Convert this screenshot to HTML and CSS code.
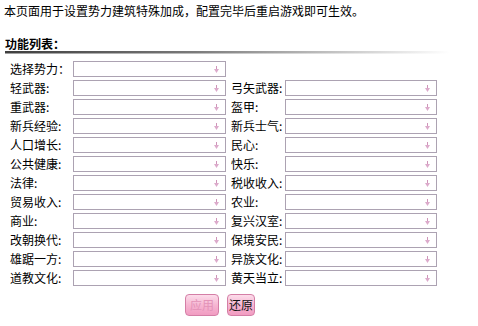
FILE: index.html
```html
<!DOCTYPE html>
<html lang="zh">
<head>
<meta charset="utf-8">
<title>功能列表</title>
<link rel="stylesheet" href="styles.css">
</head>
<body>
<p class="intro">本页面用于设置势力建筑特殊加成，配置完毕后重启游戏即可生效。</p>
<h3 class="title">功能列表：</h3>
<div class="rule"></div>
<div class="grid">
  <span class="lbl">选择势力：</span><div class="sel"><svg width="5" height="7" viewBox="0 0 5 7"><rect x="2" y="0" width="1" height="4" fill="#cf95b9"/><polygon points="0,3 5,3 2.5,7" fill="#dcaacb"/></svg></div><span class="lbl2"></span><span></span>
  <span class="lbl">轻武器:</span><div class="sel"><svg width="5" height="7" viewBox="0 0 5 7"><rect x="2" y="0" width="1" height="4" fill="#cf95b9"/><polygon points="0,3 5,3 2.5,7" fill="#dcaacb"/></svg></div><span class="lbl2">弓矢武器:</span><div class="sel"><svg width="5" height="7" viewBox="0 0 5 7"><rect x="2" y="0" width="1" height="4" fill="#cf95b9"/><polygon points="0,3 5,3 2.5,7" fill="#dcaacb"/></svg></div>
  <span class="lbl">重武器:</span><div class="sel"><svg width="5" height="7" viewBox="0 0 5 7"><rect x="2" y="0" width="1" height="4" fill="#cf95b9"/><polygon points="0,3 5,3 2.5,7" fill="#dcaacb"/></svg></div><span class="lbl2">盔甲:</span><div class="sel"><svg width="5" height="7" viewBox="0 0 5 7"><rect x="2" y="0" width="1" height="4" fill="#cf95b9"/><polygon points="0,3 5,3 2.5,7" fill="#dcaacb"/></svg></div>
  <span class="lbl">新兵经验:</span><div class="sel"><svg width="5" height="7" viewBox="0 0 5 7"><rect x="2" y="0" width="1" height="4" fill="#cf95b9"/><polygon points="0,3 5,3 2.5,7" fill="#dcaacb"/></svg></div><span class="lbl2">新兵士气:</span><div class="sel"><svg width="5" height="7" viewBox="0 0 5 7"><rect x="2" y="0" width="1" height="4" fill="#cf95b9"/><polygon points="0,3 5,3 2.5,7" fill="#dcaacb"/></svg></div>
  <span class="lbl">人口增长:</span><div class="sel"><svg width="5" height="7" viewBox="0 0 5 7"><rect x="2" y="0" width="1" height="4" fill="#cf95b9"/><polygon points="0,3 5,3 2.5,7" fill="#dcaacb"/></svg></div><span class="lbl2">民心:</span><div class="sel"><svg width="5" height="7" viewBox="0 0 5 7"><rect x="2" y="0" width="1" height="4" fill="#cf95b9"/><polygon points="0,3 5,3 2.5,7" fill="#dcaacb"/></svg></div>
  <span class="lbl">公共健康:</span><div class="sel"><svg width="5" height="7" viewBox="0 0 5 7"><rect x="2" y="0" width="1" height="4" fill="#cf95b9"/><polygon points="0,3 5,3 2.5,7" fill="#dcaacb"/></svg></div><span class="lbl2">快乐:</span><div class="sel"><svg width="5" height="7" viewBox="0 0 5 7"><rect x="2" y="0" width="1" height="4" fill="#cf95b9"/><polygon points="0,3 5,3 2.5,7" fill="#dcaacb"/></svg></div>
  <span class="lbl">法律:</span><div class="sel"><svg width="5" height="7" viewBox="0 0 5 7"><rect x="2" y="0" width="1" height="4" fill="#cf95b9"/><polygon points="0,3 5,3 2.5,7" fill="#dcaacb"/></svg></div><span class="lbl2">税收收入:</span><div class="sel"><svg width="5" height="7" viewBox="0 0 5 7"><rect x="2" y="0" width="1" height="4" fill="#cf95b9"/><polygon points="0,3 5,3 2.5,7" fill="#dcaacb"/></svg></div>
  <span class="lbl">贸易收入:</span><div class="sel"><svg width="5" height="7" viewBox="0 0 5 7"><rect x="2" y="0" width="1" height="4" fill="#cf95b9"/><polygon points="0,3 5,3 2.5,7" fill="#dcaacb"/></svg></div><span class="lbl2">农业:</span><div class="sel"><svg width="5" height="7" viewBox="0 0 5 7"><rect x="2" y="0" width="1" height="4" fill="#cf95b9"/><polygon points="0,3 5,3 2.5,7" fill="#dcaacb"/></svg></div>
  <span class="lbl">商业:</span><div class="sel"><svg width="5" height="7" viewBox="0 0 5 7"><rect x="2" y="0" width="1" height="4" fill="#cf95b9"/><polygon points="0,3 5,3 2.5,7" fill="#dcaacb"/></svg></div><span class="lbl2">复兴汉室:</span><div class="sel"><svg width="5" height="7" viewBox="0 0 5 7"><rect x="2" y="0" width="1" height="4" fill="#cf95b9"/><polygon points="0,3 5,3 2.5,7" fill="#dcaacb"/></svg></div>
  <span class="lbl">改朝换代:</span><div class="sel"><svg width="5" height="7" viewBox="0 0 5 7"><rect x="2" y="0" width="1" height="4" fill="#cf95b9"/><polygon points="0,3 5,3 2.5,7" fill="#dcaacb"/></svg></div><span class="lbl2">保境安民:</span><div class="sel"><svg width="5" height="7" viewBox="0 0 5 7"><rect x="2" y="0" width="1" height="4" fill="#cf95b9"/><polygon points="0,3 5,3 2.5,7" fill="#dcaacb"/></svg></div>
  <span class="lbl">雄踞一方:</span><div class="sel"><svg width="5" height="7" viewBox="0 0 5 7"><rect x="2" y="0" width="1" height="4" fill="#cf95b9"/><polygon points="0,3 5,3 2.5,7" fill="#dcaacb"/></svg></div><span class="lbl2">异族文化:</span><div class="sel"><svg width="5" height="7" viewBox="0 0 5 7"><rect x="2" y="0" width="1" height="4" fill="#cf95b9"/><polygon points="0,3 5,3 2.5,7" fill="#dcaacb"/></svg></div>
  <span class="lbl">道教文化:</span><div class="sel"><svg width="5" height="7" viewBox="0 0 5 7"><rect x="2" y="0" width="1" height="4" fill="#cf95b9"/><polygon points="0,3 5,3 2.5,7" fill="#dcaacb"/></svg></div><span class="lbl2">黄天当立:</span><div class="sel"><svg width="5" height="7" viewBox="0 0 5 7"><rect x="2" y="0" width="1" height="4" fill="#cf95b9"/><polygon points="0,3 5,3 2.5,7" fill="#dcaacb"/></svg></div>
</div>
<div class="actions">
  <button class="btn btn-apply" type="button">应用</button>
  <button class="btn btn-reset" type="button">还原</button>
</div>
</body>
</html>
```

FILE: styles.css
```css
html, body {
  margin: 0;
  padding: 0;
  background: #fff;
}
body {
  font-family: "Noto Sans CJK SC", "Noto Sans", sans-serif;
  font-size: 12px;
  color: #000;
}
.intro {
  margin: 0;
  padding: 3px 0 0 4px;
  line-height: 16px;
  height: 16px;
}
.title {
  margin: 18px 0 0 5px;
  font-size: 12px;
  font-weight: bold;
  line-height: 14px;
  height: 14px;
}
.rule {
  margin: 0 0 0 5px;
  height: 3px;
  background:
    linear-gradient(to bottom, rgba(255,255,255,0) 66%, rgba(255,255,255,0.5) 66%),
    linear-gradient(to right, #3e3e3e 0%, #7a7a7a 40%, #c4c4c4 70%, #fff 94%);
}
.grid {
  margin-top: 7px;
  padding-left: 10px;
  display: grid;
  grid-template-columns: 63px 153px 59px 152px;
  grid-auto-rows: 16px;
  row-gap: 3px;
}
.lbl, .lbl2 {
  line-height: 16px;
  white-space: nowrap;
  color: #000;
}
.lbl2 {
  padding-left: 5px;
}
.sel {
  box-sizing: border-box;
  height: 16px;
  border: 1px solid #aca2b2;
  background: #fff;
  display: flex;
  align-items: center;
  justify-content: flex-end;
  padding-right: 6px;
}
.sel svg {
  display: block;
}
.actions {
  margin-top: 8px;
  padding-left: 185px;
  display: flex;
  gap: 8px;
}
.btn {
  box-sizing: border-box;
  height: 22px;
  padding: 0;
  border: 1px solid #d47ea6;
  border-radius: 4px;
  background: linear-gradient(to bottom, #fcdcea 0%, #f6b6d2 50%, #f19cc2 100%);
  font-family: "Noto Sans CJK SC", "Noto Sans", sans-serif;
  font-size: 12px;
  line-height: 20px;
  white-space: nowrap;
}
.btn-apply {
  width: 34px;
  color: #e393b8;
}
.btn-reset {
  width: 28px;
  color: #111;
}
```
